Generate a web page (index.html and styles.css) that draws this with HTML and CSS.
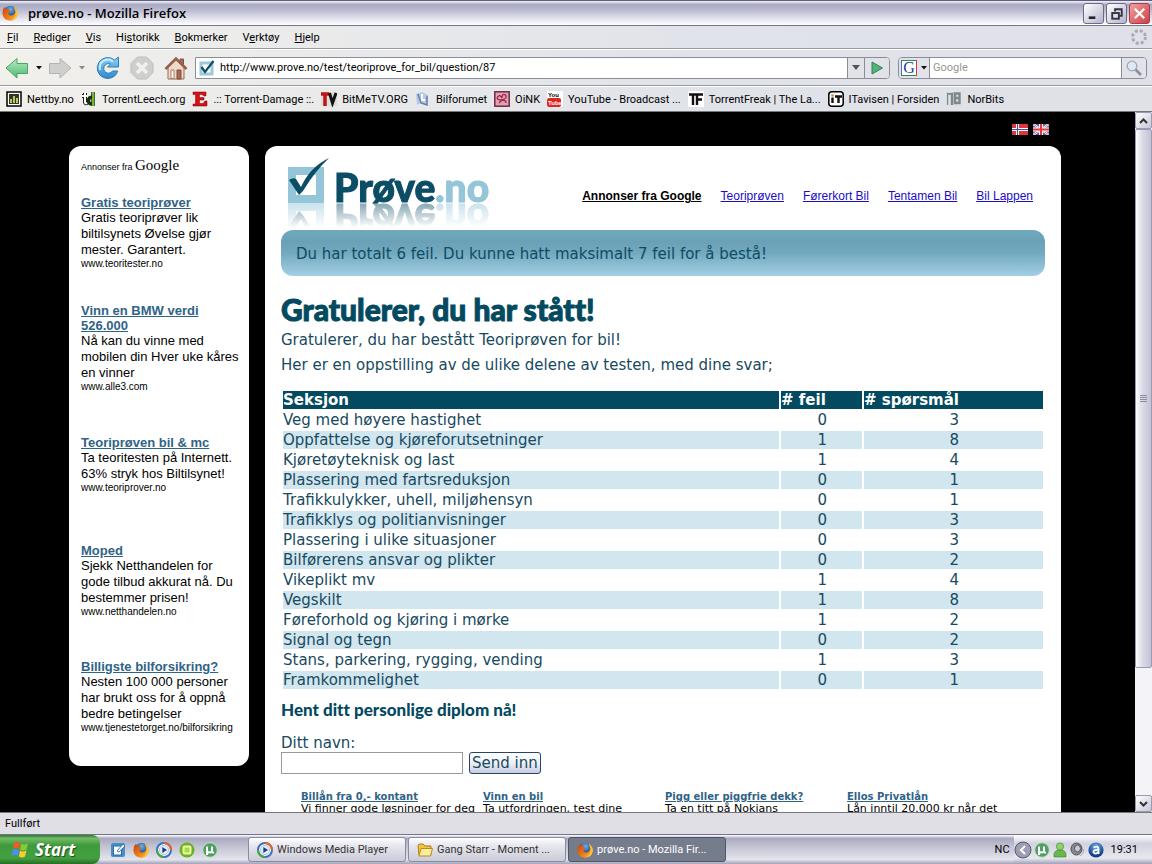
FILE: index.html
```html
<!DOCTYPE html>
<html lang="no">
<head>
  <meta charset="UTF-8" />
  <meta name="viewport" content="width=device-width, initial-scale=1.0" />
  <title>prøve.no - Mozilla Firefox</title>
  <link rel="stylesheet" href="styles.css">
</head>

<body>
  <!-- Shared icons -->
  <svg class="sprite" aria-hidden="true">
    <defs>
      <radialGradient id="globe" cx=".5" cy=".3" r=".6">
        <stop offset="0" stop-color="#6fb4ee" />
        <stop offset="1" stop-color="#123a86" />
      </radialGradient>
      <linearGradient id="fox" x1="0" y1="0" x2="1" y2="1">
        <stop offset="0" stop-color="#c8400f" />
        <stop offset=".6" stop-color="#f08018" />
        <stop offset="1" stop-color="#f9cf3c" />
      </linearGradient>
      <linearGradient id="greenArrow" x1="0" y1="0" x2="0" y2="1">
        <stop offset="0" stop-color="#b5ecc0" />
        <stop offset="1" stop-color="#4fb971" />
      </linearGradient>
      <linearGradient id="blueRing" x1="0" y1="0" x2="0" y2="1">
        <stop offset="0" stop-color="#8fd0f4" />
        <stop offset="1" stop-color="#2f87cc" />
      </linearGradient>
    </defs>
    <symbol id="firefox" viewBox="0 0 16 16">
      <circle cx="8.500" cy="7" r="6.300" fill="url(#globe)" />
      <path d="M1 4 Q2 3 3 1.500 L4 4 L7 4.500 L9 6 L6.500 7.500 Q6 10 9 10.500 Q12 10.500 13 7.500 Q13.500 4 11.500 1.500 Q16 4 15.700 9 Q15 15.500 8 15.700 Q1 15 .4 8.500 Z" fill="url(#fox)" />
      <path d="M11.500 1.500 Q16 4 15.700 9 Q15 14 10 15.300 Q14.500 11 13.700 6 Z" fill="#f9c63a" />
    </symbol>
    <symbol id="player" viewBox="0 0 16 16">
      <circle cx="8" cy="8" r="7" fill="#fff" stroke="#3a70c4" stroke-width="2" />
      <path d="M8 1 A7 7 0 0 1 15 8" fill="none" stroke="#e2662a" stroke-width="2" />
      <path d="M8 15 A7 7 0 0 1 1 8" fill="none" stroke="#4ba43c" stroke-width="2" />
      <circle cx="8" cy="8" r="4.600" fill="#e4edfa" stroke="#9ab" stroke-width=".7" />
      <path d="M6.300 5 L11 8 L6.300 11 Z" fill="#123f9c" />
    </symbol>
    <symbol id="utorrent" viewBox="0 0 16 16">
      <circle cx="8" cy="8" r="7.300" fill="#4f9f62" stroke="#c7dfca" />
      <path d="M5 13 V4.500 M5 8.500 Q5 10.500 7.500 10.500 Q10 10.500 10 8.500 V4.500 M10 9.500 Q10.500 11 12 10.300" fill="none" stroke="#fff" stroke-width="2" />
    </symbol>
  </svg>

  <header class="titlebar">
    <svg class="icon"><use href="#firefox" /></svg>
    <h1 class="window-title">prøve.no - Mozilla Firefox</h1>
    <div class="window-buttons">
      <button type="button" aria-label="Minimer">
        <svg viewBox="0 0 20 20"><path d="M5 15 H12" stroke="#fff" stroke-width="4" /><path d="M5 14.500 H12" stroke="#223" stroke-width="3" /></svg>
      </button>
      <button type="button" aria-label="Gjenopprett">
        <svg viewBox="0 0 20 20"><path d="M8.500 8 V5.500 H15.500 V12.500 H13" fill="none" stroke="#334" stroke-width="2" /><rect x="5.500" y="9.500" width="7" height="6" fill="#dfe0ee" stroke="#334" stroke-width="2" /></svg>
      </button>
      <button type="button" class="close" aria-label="Lukk">
        <svg viewBox="0 0 20 20"><path d="M5 5 L15 15 M15 5 L5 15" stroke="#fff" stroke-width="2.400" /></svg>
      </button>
    </div>
  </header>

  <nav class="menubar">
    <a href="#"><u>F</u>il</a>
    <a href="#"><u>R</u>ediger</a>
    <a href="#"><u>V</u>is</a>
    <a href="#">Hi<u>s</u>torikk</a>
    <a href="#"><u>B</u>okmerker</a>
    <a href="#">V<u>e</u>rktøy</a>
    <a href="#"><u>H</u>jelp</a>
    <svg class="throbber" viewBox="0 0 16 16"><circle cx="8" cy="8" r="6.400" fill="none" stroke="#a9abb2" stroke-width="3" stroke-dasharray="3 2.030" /></svg>
  </nav>

  <div class="toolbar">
    <div class="nav-buttons">
      <button type="button" aria-label="Tilbake">
        <svg width="24" height="24" viewBox="0 0 24 24"><path d="M1 12 L12 2.500 V7.500 H22.500 V17.500 H12 V22 Z" fill="url(#greenArrow)" stroke="#49a566" /></svg>
      </button>
      <button type="button" class="drop" aria-label="Tilbake-liste"><svg width="6" height="4"><path d="M0 0 H6 L3 3.500 Z" fill="#111" /></svg></button>
      <button type="button" aria-label="Frem">
        <svg width="24" height="24" viewBox="0 0 24 24"><path d="M23 12 L12 2.500 V7.500 H1.500 V17.500 H12 V22 Z" fill="#cfcfcd" stroke="#b4b4b2" /></svg>
      </button>
      <button type="button" class="drop" aria-label="Frem-liste"><svg width="6" height="4"><path d="M0 0 H6 L3 3.500 Z" fill="#888" /></svg></button>
      <button type="button" class="big" aria-label="Oppdater">
        <svg width="24" height="24" viewBox="0 0 24 24">
          <path d="M18.500 4 A10.500 10.500 0 1 0 21.800 15 H16.500 A4.800 4.800 0 1 1 14.500 8 L11.500 11 H22.500 V1 Z" fill="url(#blueRing)" stroke="#2d7dbd" />
          <path d="M4 14 Q2.500 6 10 3.800 Q14 3 17 5.500" fill="none" stroke="#c8eafc" stroke-width="2" />
        </svg>
      </button>
      <button type="button" class="big" aria-label="Stopp">
        <svg width="24" height="24" viewBox="0 0 24 24"><path d="M7.500 1 H16.500 L23 7.500 V16.500 L16.500 23 H7.500 L1 16.500 V7.500 Z" fill="#cfcfcd" stroke="#bdbdbb" /><path d="M7 7 L17 17 M17 7 L7 17" stroke="#f1f1ef" stroke-width="3.400" /></svg>
      </button>
      <button type="button" class="big" aria-label="Hjem">
        <svg width="24" height="24" viewBox="0 0 24 24">
          <path d="M16 3 H19.500 V9 H16 Z" fill="#a96e58" stroke="#85503e" />
          <path d="M4 11 L12 4 L20 11 V23 H4 Z" fill="#efd9c8" stroke="#9a6b57" />
          <path d="M1.500 13 L12 2.500 L22.500 13" fill="none" stroke="#95604e" stroke-width="2.600" />
          <path d="M7 14 H10 V22.500 H7 Z" fill="#fff" stroke="#a87a64" />
          <path d="M13 14 H17 V23 H13 Z" fill="#a66b50" stroke="#80513e" />
        </svg>
      </button>
    </div>
    <form class="address">
      <svg class="icon" viewBox="0 0 16 16"><rect x="2" y="3" width="11" height="11" fill="#fff" stroke="#9cc9da" stroke-width="3" /><path d="M2.500 7 L6 12 L14.500 1" fill="none" stroke="#0d4c63" stroke-width="2.200" /></svg>
      <input type="text" aria-label="Adresse" value="http://www.prove.no/test/teoriprove_for_bil/question/87">
      <button type="button" class="addr-drop" aria-label="Historikk"><svg width="8" height="5"><path d="M0 0 H8 L4 5 Z" fill="#555" /></svg></button>
      <button type="button" class="go" aria-label="Gå"><svg width="14" height="14" viewBox="0 0 14 14"><path d="M2 1 L12.500 7 L2 13 Z" fill="#57b17a" stroke="#2d8154" /></svg></button>
    </form>
    <form class="search">
      <button type="button" class="engine" aria-label="Søkemotor">
        <span class="google-g">G</span>
        <svg width="6" height="4"><path d="M0 0 H6 L3 3.500 Z" fill="#111" /></svg>
      </button>
      <input type="text" aria-label="Søk" placeholder="Google">
      <button type="button" class="lens" aria-label="Søk"><svg width="16" height="16" viewBox="0 0 16 16"><path d="M9 9 L15 15" stroke="#8b8e98" stroke-width="2.600" /><circle cx="6" cy="6" r="4.800" fill="#dbeaf5" stroke="#a4a8b3" stroke-width="1.300" /></svg></button>
    </form>
  </div>

  <nav class="bookmarks">
    <a href="#"><svg class="icon" viewBox="0 0 16 16"><rect x="1" y="1" width="14" height="14" fill="#fff" stroke="#000" stroke-width="1.500" /><rect x="3" y="3" width="10" height="10" fill="#33381d" /><path d="M5 12 V8 M8 12 V5 M11 12 V7" stroke="#b8c76a" stroke-width="2" /></svg>Nettby.no</a>
    <a href="#"><svg class="icon" viewBox="0 0 16 16"><path d="M4 2 V11 Q4 13 6.500 12 M1 5 H6" stroke="#222" stroke-width="4" fill="none" /><path d="M4 2 V11 Q4 13 6.500 12 M1 5 H6" stroke="#fff" stroke-width="2" fill="none" /><path d="M12 1 V15 M12 7 Q7 5 7.500 11 Q9 14 12 12" stroke="#17300c" stroke-width="3.500" fill="none" /><path d="M12 1 V15" stroke="#72b92b" stroke-width="2" /></svg>TorrentLeech.org</a>
    <a href="#"><svg class="icon" viewBox="0 0 16 16"><path d="M1 1 H14 V5 H12 L10 3.500 H7.500 V6.500 H12 V9 H7.500 V12.500 H11 L13 10 H15 V15 H1 V13 H3.500 V3.500 H1 Z" fill="#d51214" stroke="#7e0707" stroke-width=".5" /></svg>.:: Torrent-Damage ::.</a>
    <a href="#"><svg class="icon" viewBox="0 0 16 16"><path d="M0 1 H16 V15 H0 Z" fill="#ddd" /><path d="M0 3 H8 M4 3 V15" stroke="#c11414" stroke-width="3.500" /><path d="M8.500 2 L11.500 12 L15 2" fill="none" stroke="#111" stroke-width="3" /></svg>BitMeTV.ORG</a>
    <a href="#"><svg class="icon" viewBox="0 0 16 16"><path d="M1 3 L7 1 L13 4 L12 14 L6 12 L2 14 Z" fill="#b4c8e6" /><path d="M3 3 L6 12 L12 14 V5" fill="none" stroke="#657eac" stroke-width="1.500" /><path d="M7 3 V9 H10" fill="none" stroke="#fff" stroke-width="2" /></svg>Bilforumet</a>
    <a href="#"><svg class="icon" viewBox="0 0 16 16"><rect x=".8" y=".8" width="14.400" height="14.400" fill="#e1a2b3" stroke="#6f2945" stroke-width="1.500" /><path d="M8 9 Q2 9 3.500 6 Q6 3 8 7 Q8 2 11.500 4 Q14 7 8 9 L5 12 M8 9 Q12 9 12 12" fill="none" stroke="#98294e" stroke-width="1.300" /></svg>OiNK</a>
    <a href="#"><svg class="icon" viewBox="0 0 16 16"><rect width="16" height="16" fill="#fff" /><rect x="0" y="7" width="14" height="9" rx="2" fill="#e0251f" /><text x="1" y="6" class="tiny-you">You</text><text x="1" y="14" class="tiny-tube">Tube</text></svg>YouTube - Broadcast ...</a>
    <a href="#"><svg class="icon" viewBox="0 0 16 16"><rect width="16" height="16" fill="#fff" /><path d="M1 3.500 H9 M5 3.500 V14 M9 14 V3.500 H15 M10 8.500 H14" fill="none" stroke="#111" stroke-width="2.400" /></svg>TorrentFreak | The La...</a>
    <a href="#"><svg class="icon" viewBox="0 0 16 16"><rect x=".8" y=".8" width="14.400" height="14.400" rx="3" fill="#fff" stroke="#000" stroke-width="1.500" /><path d="M4.500 6.500 V12 M7 5.500 H14 M10.500 5 V12" stroke="#111" stroke-width="2.400" /><circle cx="4.500" cy="4.500" r="1.200" fill="#e67d17" /></svg>ITavisen | Forsiden</a>
    <a href="#"><svg class="icon" viewBox="0 0 16 16"><path d="M1 14 V2.500 H6 V14 M9 2.500 H13.500 V12 H9 Z M9 7 H13" fill="none" stroke="#7f8788" stroke-width="2.400" /><path d="M.500 14 V1.500 H6.500" fill="none" stroke="#d7dddd" /></svg>NorBits</a>
  </nav>

  <div class="viewport">
    <div class="page">
      <div class="languages">
        <a href="#" aria-label="Norsk"><svg width="16" height="11" viewBox="0 0 16 11"><rect width="16" height="11" fill="#e0353b" /><path d="M5.500 0 V11 M0 5.500 H16" stroke="#fff" stroke-width="3" /><path d="M5.500 0 V11 M0 5.500 H16" stroke="#3b5598" stroke-width="1.200" /></svg></a>
        <a href="#" aria-label="English"><svg width="16" height="11" viewBox="0 0 16 11"><rect width="16" height="11" fill="#4a64a8" /><path d="M0 0 L16 11 M16 0 L0 11" stroke="#fff" stroke-width="2.200" /><path d="M0 0 L16 11 M16 0 L0 11" stroke="#d9505a" stroke-width=".8" /><path d="M8 0 V11 M0 5.500 H16" stroke="#fff" stroke-width="4" /><path d="M8 0 V11 M0 5.500 H16" stroke="#e0353b" stroke-width="2.200" /></svg></a>
      </div>

      <div class="columns">
        <aside class="sidebar">
          <div class="ads-by">Annonser fra <span>Google</span></div>
          <div class="ad-list">
            <div class="ad">
              <a href="#">Gratis teoriprøver</a>
              <p>Gratis teoriprøver lik biltilsynets Øvelse gjør mester. Garantert.</p>
              <small>www.teoritester.no</small>
            </div>
            <div class="ad">
              <a href="#">Vinn en BMW verdi 526.000</a>
              <p>Nå kan du vinne med mobilen din Hver uke kåres en vinner</p>
              <small>www.alle3.com</small>
            </div>
            <div class="ad">
              <a href="#">Teoriprøven bil &amp; mc</a>
              <p>Ta teoritesten på Internett. 63% stryk hos Biltilsynet!</p>
              <small>www.teoriprover.no</small>
            </div>
            <div class="ad">
              <a href="#">Moped</a>
              <p>Sjekk Netthandelen for gode tilbud akkurat nå. Du bestemmer prisen!</p>
              <small>www.netthandelen.no</small>
            </div>
            <div class="ad">
              <a href="#">Billigste bilforsikring?</a>
              <p>Nesten 100 000 personer har brukt oss for å oppnå bedre betingelser</p>
              <small>www.tjenestetorget.no/bilforsikring</small>
            </div>
          </div>
        </aside>

        <main class="content">
          <div class="masthead">
            <a href="#" class="logo">
              <svg width="42" height="45" viewBox="0 0 42 45"><path d="M0 9 H36 V45 H0 Z M8 17 V37 H28 V17 Z" fill="#94c5d8" fill-rule="evenodd" /><path d="M1 22 Q5 19 8 21 L13 29 Q22 9 41 0 Q27 13 15 33 L11 37 Z" fill="#0c4d66" /></svg>
              <span class="logo-text">Prøve<span>.no</span></span>
            </a>
            <nav class="ad-links">
              <a href="#" class="by">Annonser fra Google</a>
              <a href="#">Teoriprøven</a>
              <a href="#">Førerkort Bil</a>
              <a href="#">Tentamen Bil</a>
              <a href="#">Bil Lappen</a>
            </nav>
          </div>

          <div class="banner">Du har totalt 6 feil. Du kunne hatt maksimalt 7 feil for å bestå!</div>

          <h2>Gratulerer, du har stått!</h2>
          <p>Gratulerer, du har bestått Teoriprøven for bil!</p>
          <p>Her er en oppstilling av de ulike delene av testen, med dine svar;</p>

          <table class="results">
            <thead>
              <tr><th>Seksjon</th><th class="wrong"># feil</th><th class="total"># spørsmål</th></tr>
            </thead>
            <tbody>
              <tr><td>Veg med høyere hastighet</td><td>0</td><td>3</td></tr>
              <tr><td>Oppfattelse og kjøreforutsetninger</td><td>1</td><td>8</td></tr>
              <tr><td>Kjøretøyteknisk og last</td><td>1</td><td>4</td></tr>
              <tr><td>Plassering med fartsreduksjon</td><td>0</td><td>1</td></tr>
              <tr><td>Trafikkulykker, uhell, miljøhensyn</td><td>0</td><td>1</td></tr>
              <tr><td>Trafikklys og politianvisninger</td><td>0</td><td>3</td></tr>
              <tr><td>Plassering i ulike situasjoner</td><td>0</td><td>3</td></tr>
              <tr><td>Bilførerens ansvar og plikter</td><td>0</td><td>2</td></tr>
              <tr><td>Vikeplikt mv</td><td>1</td><td>4</td></tr>
              <tr><td>Vegskilt</td><td>1</td><td>8</td></tr>
              <tr><td>Føreforhold og kjøring i mørke</td><td>1</td><td>2</td></tr>
              <tr><td>Signal og tegn</td><td>0</td><td>2</td></tr>
              <tr><td>Stans, parkering, rygging, vending</td><td>1</td><td>3</td></tr>
              <tr><td>Framkommelighet</td><td>0</td><td>1</td></tr>
            </tbody>
          </table>

          <h3>Hent ditt personlige diplom nå!</h3>
          <form class="diploma">
            <label for="name">Ditt navn:</label>
            <div class="field">
              <input type="text" id="name">
              <button type="button">Send inn</button>
            </div>
          </form>

          <div class="bottom-ads">
            <div><a href="#">Billån fra 0,- kontant</a><p>Vi finner gode løsninger for deg</p></div>
            <div><a href="#">Vinn en bil</a><p>Ta utfordringen, test dine</p></div>
            <div><a href="#">Pigg eller piggfrie dekk?</a><p>Ta en titt på Nokians</p></div>
            <div><a href="#">Ellos Privatlån</a><p>Lån inntil 20.000 kr når det</p></div>
          </div>
        </main>
      </div>
    </div>

    <div class="scrollbar">
      <button type="button" aria-label="Opp"><svg width="9" height="6"><path d="M1 5 L4.500 1.500 L8 5" fill="none" stroke="#333" stroke-width="2" /></svg></button>
      <div class="track"><div class="thumb"></div></div>
      <button type="button" aria-label="Ned"><svg width="9" height="6"><path d="M1 1 L4.500 4.500 L8 1" fill="none" stroke="#333" stroke-width="2" /></svg></button>
    </div>
  </div>

  <div class="statusbar">Fullført</div>

  <footer class="taskbar">
    <button type="button" class="start">
      <svg width="18" height="18" viewBox="0 0 18 18"><path d="M3 2 Q6 0 9 2 L8 8 Q5 6 2 8 Z" fill="#ee5a24" /><path d="M10 2.500 Q13 4.500 17 2.500 L15.500 8.500 Q12 10.500 9 8.500 Z" fill="#8cc63c" /><path d="M1.700 9 Q5 7 8 9 L7 15 Q4 13 .5 15 Z" fill="#4b8df0" /><path d="M9 9.500 Q12 11.500 15.500 9.500 L14 15.500 Q11 17.500 7.800 15.500 Z" fill="#fccb2c" /></svg>
      Start
    </button>
    <div class="quick-launch">
      <a href="#" aria-label="Skrivebord"><svg class="icon" viewBox="0 0 16 16"><rect x="1" y="1" width="14" height="14" rx="2" fill="#4390cc" /><rect x="3.500" y="4" width="8" height="9" fill="#fff" stroke="#2a6caa" /><path d="M7 9 L13 2 L15 4 L9 10 Z" fill="#e8f3fb" stroke="#286299" stroke-width=".8" /></svg></a>
      <a href="#" aria-label="Firefox"><svg class="icon"><use href="#firefox" /></svg></a>
      <a href="#" aria-label="Media Player"><svg class="icon"><use href="#player" /></svg></a>
      <a href="#" aria-label="Musikk"><svg class="icon" viewBox="0 0 16 16"><circle cx="8" cy="8" r="7.500" fill="#66b51f" /><rect x="4.500" y="4.500" width="7" height="7" rx="1" fill="#a8d94b" stroke="#f4f9a8" stroke-width="2" /></svg></a>
      <a href="#" aria-label="uTorrent"><svg class="icon"><use href="#utorrent" /></svg></a>
    </div>
    <div class="tasks">
      <button type="button"><svg class="icon"><use href="#player" /></svg>Windows Media Player</button>
      <button type="button"><svg class="icon" viewBox="0 0 16 16"><path d="M1 4 Q1 2 3 2 H6 L8 4 H14 V13 H2 Z" fill="#f0c341" stroke="#b07d16" /><path d="M4 6.500 H15.500 L13.500 14 H2 Z" fill="#fdec9a" stroke="#b98a20" /></svg>Gang Starr - Moment ...</button>
      <button type="button" class="active"><svg class="icon"><use href="#firefox" /></svg>prøve.no - Mozilla Fir...</button>
    </div>
    <span class="lang">NC</span>
    <div class="tray">
      <svg class="chevron" viewBox="0 0 18 18"><circle cx="9" cy="9" r="8" fill="#9d9db3" stroke="#565670" /><path d="M11 5 L7 9 L11 13" fill="none" stroke="#fff" stroke-width="2" /></svg>
      <svg class="icon"><use href="#utorrent" /></svg>
      <svg class="icon" viewBox="0 0 16 16"><path d="M2 15 Q1 8 8 8 Q15 8 14 15 Z" fill="#69b84c" stroke="#3f8a2e" stroke-width=".7" /><circle cx="8" cy="4.500" r="3.600" fill="#8fd46b" stroke="#3f8a2e" stroke-width=".7" /></svg>
      <svg class="icon" viewBox="0 0 16 16"><ellipse cx="6.500" cy="7" rx="5.500" ry="6" fill="#8a8a94" stroke="#4c4c55" /><ellipse cx="7.500" cy="6.500" rx="3" ry="3.500" fill="#c9c9cf" stroke="#55555e" /><path d="M10 14 Q14 12 14 7" fill="none" stroke="#aaaad8" /></svg>
      <svg class="icon" viewBox="0 0 16 16"><circle cx="8" cy="8" r="7.600" fill="url(#globe)" /><path d="M5.500 5.500 Q10.500 3 10.500 7 V12 M10.500 8 Q5 7.500 5.500 10.500 Q7.500 13 10.500 10" fill="none" stroke="#fff" stroke-width="1.800" /></svg>
      <time>19:31</time>
    </div>
  </footer>
</body>
</html>
```
FILE: styles.css
```css
:root {
  --ui: Roboto, "Open Sans", sans-serif;
  --arial: "Liberation Sans", Arial, sans-serif;
  --verdana: "DejaVu Sans", Verdana, sans-serif;
  --display: Lato, "Open Sans", sans-serif;
  --petrol: #034a61;
  --text: #174a5e;
  --stripe: #d2e6f0;
  --link: #2f6388;
  --chrome: linear-gradient(90deg, #f1f0eb, #e1e3ea 60%, #dfe0e8);
}

* {
  box-sizing: border-box;
  margin: 0;
  padding: 0;
}

body {
  display: flex;
  flex-direction: column;
  height: 100vh;
  overflow: hidden;
  background: #000;
  font-family: var(--ui);
  font-size: 11px;
  color: #000;
}

button,
input {
  font: inherit;
  color: inherit;
  border: none;
  background: none;
}

.sprite {
  position: absolute;
  width: 0;
  height: 0;
}

.icon {
  width: 16px;
  height: 16px;
  flex-shrink: 0;
}

/* Window title */
.titlebar {
  display: flex;
  align-items: center;
  flex-shrink: 0;
  height: 26px;
  padding: 0 2px;
  gap: 10px;
  border-top: 1px solid #5f5f7c;
  border-bottom: 1px solid #75758e;
  background: linear-gradient(#f4f4fa, #a9a9c3 15%, #bdbdd2 40%, #e4e4ee 75%, #fff);
}

.window-title {
  flex: 1;
  font-family: "Open Sans", sans-serif;
  font-size: 13px;
  font-weight: 600;
}

.window-buttons {
  display: flex;
  gap: 2px;
}

.window-buttons button {
  width: 21px;
  height: 21px;
  border: 1px solid #6a6a86;
  border-radius: 3px;
  background: linear-gradient(135deg, #fff, #b4b4cc);
}

.window-buttons svg {
  display: block;
}

.window-buttons .close {
  border-color: #a53d48;
  background: linear-gradient(135deg, #f0a0a0, #d03f44);
}

/* Menu and toolbars */
.menubar,
.toolbar,
.bookmarks {
  display: flex;
  align-items: center;
  flex-shrink: 0;
  background: var(--chrome);
  border-bottom: 1px solid #9a9a9e;
}

.menubar {
  height: 23px;
  padding: 0 5px 0 7px;
  gap: 15px;
}

.menubar a,
.bookmarks a {
  color: #000;
  text-decoration: none;
  white-space: nowrap;
}

.throbber {
  width: 16px;
  height: 16px;
  margin-left: auto;
}

.toolbar {
  height: 37px;
  padding: 0 5px;
  gap: 2px;
  border-top: 1px solid #fff;
}

.nav-buttons {
  display: flex;
  align-items: center;
}

.nav-buttons button {
  display: flex;
  align-items: center;
  justify-content: center;
}

.nav-buttons .drop {
  width: 19px;
  height: 24px;
}

.nav-buttons .big {
  width: 34px;
}

.address,
.search {
  display: flex;
  align-items: center;
  height: 22px;
  border: 1px solid #8b8d96;
  background: #fff;
}

.address {
  flex: 1;
  padding-left: 3px;
  border-radius: 0 4px 4px 0;
}

.search {
  width: 249px;
  margin-left: 6px;
  border-radius: 4px;
}

.address input,
.search input {
  flex: 1;
  min-width: 0;
  padding-left: 5px;
}

.search input {
  padding-left: 3px;
}

.search input::placeholder {
  color: #98988f;
}

.address button,
.search button {
  display: flex;
  align-items: center;
  justify-content: center;
  height: 20px;
  background: #e2e3ea;
}

.address button,
.search .lens {
  border-left: 1px solid #8b8d96;
}

.addr-drop {
  width: 17px;
}

.go,
.lens {
  width: 25px;
  border-radius: 0 3px 3px 0;
}

.search .engine {
  width: 31px;
  gap: 4px;
  border-right: 1px solid #8b8d96;
  border-radius: 3px 0 0 3px;
}

.google-g {
  width: 16px;
  height: 16px;
  border: 1px solid;
  border-color: #2f8d46 #ce3b32 #2f8d46 #4570c6;
  background: #fff;
  font-family: "Liberation Serif", serif;
  font-size: 16px;
  line-height: 14px;
  color: #1d3f9c;
}

.bookmarks {
  height: 26px;
  padding: 0 6px;
  gap: 7px;
  border-top: 1px solid #fff;
  border-bottom-color: #777;
}

.bookmarks a {
  display: flex;
  align-items: center;
  gap: 5px;
}

.tiny-you,
.tiny-tube {
  font: 700 6px var(--arial);
}

.tiny-tube {
  fill: #fff;
}

/* Page area */
.viewport {
  display: flex;
  flex: 1;
  min-height: 0;
}

.page {
  flex: 1;
  overflow: hidden;
  padding-right: 5px;
}

.languages {
  display: flex;
  justify-content: flex-end;
  gap: 5px;
  max-width: 992px;
  height: 34px;
  margin: 0 auto;
  padding: 12px 12px 0 0;
}

.columns {
  display: flex;
  align-items: flex-start;
  gap: 16px;
  max-width: 992px;
  margin: 0 auto;
}

.sidebar {
  flex: 0 0 180px;
  padding: 10px 10px 12px 12px;
  border-radius: 12px;
  background: #fff;
  font-family: var(--arial);
}

.ads-by {
  height: 39px;
  font-size: 9px;
  line-height: 18px;
  white-space: nowrap;
}

.ads-by span {
  font-family: "Liberation Serif", serif;
  font-size: 15px;
}

.ad-list {
  display: grid;
  grid-template-rows: 108px 132px 108px 116px 95px;
}

.ad a {
  display: block;
  font-size: 13px;
  font-weight: 700;
  line-height: 15px;
  color: var(--link);
}

.ad p {
  font-size: 13px;
  line-height: 16px;
}

.ad small {
  display: block;
  font-size: 10px;
  line-height: 12px;
  white-space: nowrap;
}

.content {
  flex: 1;
  min-width: 0;
  padding: 12px 16px;
  border-radius: 12px 12px 0 0;
  background: #fff;
  font-family: var(--verdana);
  font-size: 15px;
  color: var(--text);
}

.masthead {
  display: flex;
  justify-content: space-between;
  align-items: flex-start;
  height: 72px;
  padding: 0 12px 0 7px;
}

.logo {
  display: flex;
  align-items: flex-end;
  gap: 4px;
  height: 45px;
  text-decoration: none;
  -webkit-box-reflect: below 0 linear-gradient(transparent 45%, rgba(0, 0, 0, 0.5));
}

.logo-text {
  font-family: var(--display);
  font-size: 39px;
  font-weight: 900;
  line-height: 32px;
  color: #0c4d66;
  -webkit-text-stroke: 1px;
}

.logo-text span {
  color: #94c5d8;
}

.ad-links {
  display: flex;
  gap: 19px;
  padding-top: 31px;
  font-family: var(--arial);
  font-size: 12px;
  line-height: 14px;
}

.ad-links a {
  color: #1a0dc8;
}

.ad-links .by {
  color: #000;
  font-weight: 700;
}

.banner {
  height: 46px;
  padding-left: 15px;
  border-radius: 12px;
  background: linear-gradient(#70a9bd, #6aa1b6 25%, #72a9bf 50%, #a4cfe4);
  line-height: 48px;
  color: #0f4c63;
}

.content h2 {
  margin-top: 14px;
  font-family: var(--display);
  font-size: 30px;
  font-weight: 900;
  line-height: 38px;
  color: var(--petrol);
  font-variant-ligatures: none;
  -webkit-text-stroke: 1px;
}

.content > p {
  line-height: 25px;
}

.results {
  width: 100%;
  margin-top: 11px;
  border-spacing: 2px;
}

.results th,
.results td {
  height: 18px;
  line-height: 18px;
}

.results th {
  background: var(--petrol);
  color: #fff;
  text-align: left;
}

.results .wrong {
  width: 81px;
}

.results .total {
  width: 179px;
}

.results tbody tr:nth-child(even) td {
  background: var(--stripe);
}

.results td + td {
  padding-right: 35px;
  text-align: right;
}

.results td + td + td {
  padding-right: 84px;
}

.content h3 {
  font-family: var(--display);
  font-size: 17px;
  font-weight: 900;
  line-height: 38px;
  color: var(--petrol);
  font-variant-ligatures: none;
}

.diploma label {
  display: block;
  margin-top: 5px;
  line-height: 18px;
}

.field {
  display: flex;
  gap: 6px;
}

.field input {
  width: 182px;
  height: 22px;
  padding: 0 3px;
  border: 1px solid #9a9a9a;
}

.field button {
  height: 22px;
  padding: 0 2px;
  border: 1px solid #24466e;
  border-radius: 3px;
  background: linear-gradient(#fff, #eef0f6 50%, #c5cbe0);
}

.bottom-ads {
  display: grid;
  grid-template-columns: repeat(4, 182px);
  padding: 17px 16px 0 20px;
  font-size: 11px;
  line-height: 12px;
  color: #000;
}

.bottom-ads a {
  font-size: 10px;
  font-weight: 700;
  color: var(--link);
}

.bottom-ads p {
  white-space: nowrap;
}

/* Scroll bar */
.scrollbar {
  display: flex;
  flex-direction: column;
  flex: 0 0 17px;
  background: #f3f3f8;
}

.scrollbar button {
  display: flex;
  align-items: center;
  justify-content: center;
  height: 17px;
  border: 1px solid #9a9ab0;
  border-radius: 2px;
  background: linear-gradient(135deg, #fff, #c6c6d8);
}

.track {
  flex: 1;
}

.thumb {
  display: flex;
  align-items: center;
  justify-content: center;
  height: 81%;
  border: 1px solid #9a9ab0;
  border-radius: 2px;
  background: linear-gradient(90deg, #fff, #dcdce8 40%, #c2c2d4);
}

.thumb::before {
  content: "";
  width: 7px;
  height: 8px;
  background: repeating-linear-gradient(#8c8ca4 0 1px, transparent 1px 2px);
}

/* Status bar and taskbar */
.statusbar {
  flex-shrink: 0;
  height: 22px;
  padding-left: 5px;
  border-top: 1px solid #777;
  background: #dfdfe5;
  line-height: 21px;
}

.taskbar {
  display: flex;
  align-items: center;
  flex-shrink: 0;
  height: 30px;
  border-top: 1px solid #74748f;
  background: linear-gradient(#fff, #a9a9c0 12%, #c3c3d3 40%, #e4e4ec 85%, #a0a0b8);
}

.start {
  display: flex;
  align-items: center;
  gap: 6px;
  width: 100px;
  height: 29px;
  padding-left: 11px;
  border-radius: 0 8px 8px 0;
  background: linear-gradient(#2d7a2c, #72bb68 12%, #3f9a3c 35%, #43a03f 80%, #246d24);
  font-family: "Open Sans", sans-serif;
  font-size: 17px;
  font-style: italic;
  font-weight: 700;
  color: #fff;
  text-shadow: 1px 1px 1px #1c4d1c;
}

.quick-launch {
  display: flex;
  gap: 7px;
  width: 148px;
  padding-left: 10px;
}

.quick-launch a,
.quick-launch svg {
  display: block;
}

.tasks {
  display: flex;
  flex: 1;
  gap: 2px;
}

.tasks button {
  display: flex;
  align-items: center;
  gap: 4px;
  flex: 0 1 158px;
  height: 25px;
  padding: 0 8px;
  border: 1px solid #8a8aa2;
  border-radius: 3px;
  background: linear-gradient(#fff, #e8e8f0 30%, #cbcbd8);
  color: #333;
  white-space: nowrap;
}

.tasks .active {
  border-color: #50546a;
  background: #757c8c;
  color: #fff;
}

.lang {
  padding-right: 4px;
}

.tray {
  display: flex;
  align-items: center;
  gap: 2px;
  height: 29px;
  padding-right: 14px;
  background: linear-gradient(#fff, #d2d2df 30%, #e8e8ef 80%, #a0a0b8);
}

.chevron {
  width: 18px;
  height: 18px;
}

.tray time {
  margin-left: 5px;
}
```
